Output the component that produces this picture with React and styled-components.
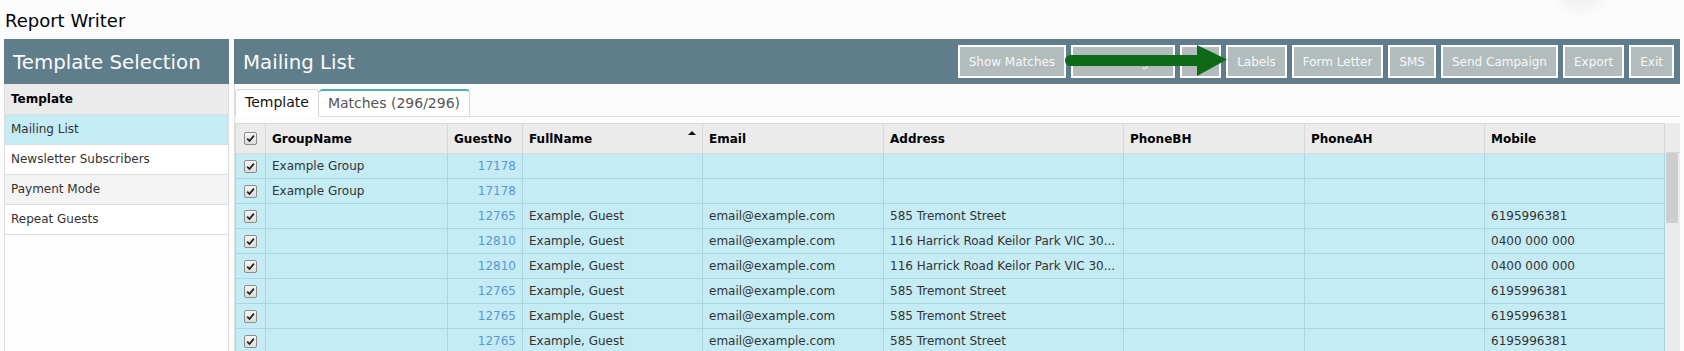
import React from 'react'
import styled, { createGlobalStyle } from 'styled-components'

const GlobalStyle = createGlobalStyle`
  html, body {
    margin: 0;
    padding: 0;
    background: #fcfcfc;
    font-family: "DejaVu Sans", Verdana, sans-serif;
    color: #333;
    overflow: hidden;
  }
`

const Page = styled.div`
  position: relative;
  padding: 8px 4px 0 4px;
  height: 351px;
  box-sizing: border-box;
  overflow: hidden;
`

const Glow = styled.div`
  position: absolute;
  top: -30px;
  left: 1548px;
  width: 66px;
  height: 50px;
  border-radius: 50%;
  background: radial-gradient(ellipse at center, rgba(0,0,0,0.06) 0%, rgba(0,0,0,0) 70%);
`

const PageTitle = styled.h1`
  margin: 0;
  height: 31px;
  font-size: 18px;
  font-weight: normal;
  line-height: 26px;
  color: #000;
  padding-left: 1px;
`

const Columns = styled.div`
  display: flex;
  gap: 5px;
  align-items: stretch;
`

const Sidebar = styled.div`
  width: 225px;
  flex-shrink: 0;
  display: flex;
  flex-direction: column;
  height: 320px;
`

const PanelHeader = styled.div`
  position: relative;
  height: 45px;
  background: #607d8b;
  color: #fafafa;
  display: flex;
  align-items: center;
  padding: 0 6px 0 9px;
  font-size: 19.8px;
  flex-shrink: 0;
`

const HeaderTitle = styled.div`
  flex: 1;
  padding-top: 1px;
`

const SideList = styled.div`
  flex: 1;
  background: #fdfdfd;
  border-left: 1px solid #ddd;
  border-right: 1px solid #ddd;
`

const SideItem = styled.div`
  height: ${({ tone }) => (tone === 'head' ? '30px' : '29px')};
  line-height: ${({ tone }) => (tone === 'head' ? '30px' : '29px')};
  padding-left: 6px;
  font-size: 12px;
  border-bottom: 1px solid #dedede;
  color: ${({ bold }) => (bold ? '#000' : '#333')};
  font-weight: ${({ bold }) => (bold ? 'bold' : 'normal')};
  background: ${({ tone }) =>
    tone === 'head' ? '#ebebeb' : tone === 'active' ? '#c5ebf4' : tone === 'alt' ? '#f3f3f3' : '#fff'};
`

const Main = styled.div`
  flex: 1;
  display: flex;
  flex-direction: column;
  min-width: 0;
`

const ButtonBar = styled.div`
  display: flex;
  gap: 5px;
`

const HeadButton = styled.button`
  height: 33px;
  box-sizing: border-box;
  border: 2px solid #fff;
  background: #b2bcbd;
  color: #f7f7f7;
  font-family: inherit;
  font-size: 12px;
  padding: 0 9px;
  width: ${({ w }) => (w ? `${w}px` : 'auto')};
  white-space: nowrap;
  overflow: hidden;
  cursor: pointer;
`

const Arrow = styled.svg`
  position: absolute;
  left: 826px;
  top: 0;
`

const Body = styled.div`
  border-left: 1px solid #ddd;
  padding-top: 5px;
`

const TabStrip = styled.div`
  display: flex;
  border-bottom: 1px solid #dcdcdc;
  height: 27px;
  align-items: flex-end;
`

const Tab = styled.div`
  height: 28px;
  box-sizing: border-box;
  padding: 0 9px;
  font-size: 14px;
  line-height: 25px;
  background: #fff;
  border: 1px solid #d6d6d6;
  border-top: ${({ accent }) => (accent ? '2px solid #45b4bc' : '1px solid #d6d6d6')};
  border-bottom: ${({ active }) => (active ? '1px solid #fff' : '1px solid #dcdcdc')};
  border-left: ${({ accent }) => (accent ? 'none' : '1px solid #d6d6d6')};
  border-radius: 4px 4px 0 0;
  color: ${({ active }) => (active ? '#111' : '#555')};
  margin-bottom: -1px;
`

const GridWrap = styled.div`
  display: flex;
  margin-top: 6px;
`

const Table = styled.table`
  border-collapse: collapse;
  table-layout: fixed;
  width: 1429px;
  font-size: 12px;
`

const Th = styled.th`
  position: relative;
  height: 29px;
  background: #ebebeb;
  border: 1px solid #d8d8d8;
  text-align: left;
  padding: 0 6px;
  color: #000;
  font-weight: bold;
  white-space: nowrap;
  overflow: hidden;
`

const Td = styled.td`
  height: 24px;
  background: #c5ebf4;
  border: 1px solid #a9d6e2;
  padding: 0 6px;
  text-align: ${({ num }) => (num ? 'right' : 'left')};
  color: ${({ num }) => (num ? '#5a98d2' : '#333')};
  white-space: nowrap;
  overflow: hidden;
  text-overflow: clip;
`

const CheckCell = styled.div`
  display: flex;
  justify-content: center;
  align-items: center;
`

const Box = styled.span`
  width: 11px;
  height: 11px;
  border: 1px solid #8c8c8c;
  border-radius: 2px;
  background: linear-gradient(#f6f6f6, #dcdcdc);
  display: flex;
  align-items: center;
  justify-content: center;
`

const SortMark = styled.span`
  position: absolute;
  right: 6px;
  top: 7px;
  width: 0;
  height: 0;
  border-left: 4px solid transparent;
  border-right: 4px solid transparent;
  border-bottom: 4px solid #111;
`

const ScrollCol = styled.div`
  width: 16px;
  display: flex;
  flex-direction: column;
  background: #ebebeb;
`

const ScrollHead = styled.div`
  height: 30px;
  border-bottom: 1px solid #d8d8d8;
  box-sizing: border-box;
`

const Thumb = styled.div`
  margin: 0 2px 0 1px;
  height: 70px;
  background: #cdcdcd;
`

const Check = () => (
  <CheckCell>
    <Box>
      <svg width="9" height="9" viewBox="0 0 9 9">
        <path d="M1.2 4.6 L3.5 7 L7.9 1.6" fill="none" stroke="#222" strokeWidth="1.8" />
      </svg>
    </Box>
  </CheckCell>
)

const columns = [
  { key: 'check', width: 30 },
  { key: 'GroupName', width: 182 },
  { key: 'GuestNo', width: 75 },
  { key: 'FullName', width: 180, sorted: true },
  { key: 'Email', width: 181 },
  { key: 'Address', width: 240 },
  { key: 'PhoneBH', width: 181 },
  { key: 'PhoneAH', width: 180 },
  { key: 'Mobile', width: 180 },
]

const rows = [
  { group: 'Example Group', no: '17178', name: '', email: '', addr: '', mobile: '' },
  { group: 'Example Group', no: '17178', name: '', email: '', addr: '', mobile: '' },
  { group: '', no: '12765', name: 'Example, Guest', email: 'email@example.com', addr: '585 Tremont Street', mobile: '6195996381' },
  { group: '', no: '12810', name: 'Example, Guest', email: 'email@example.com', addr: '116 Harrick Road Keilor Park VIC 30...', mobile: '0400 000 000' },
  { group: '', no: '12810', name: 'Example, Guest', email: 'email@example.com', addr: '116 Harrick Road Keilor Park VIC 30...', mobile: '0400 000 000' },
  { group: '', no: '12765', name: 'Example, Guest', email: 'email@example.com', addr: '585 Tremont Street', mobile: '6195996381' },
  { group: '', no: '12765', name: 'Example, Guest', email: 'email@example.com', addr: '585 Tremont Street', mobile: '6195996381' },
  { group: '', no: '12765', name: 'Example, Guest', email: 'email@example.com', addr: '585 Tremont Street', mobile: '6195996381' },
]

const templates = [
  { label: 'Mailing List', tone: 'active' },
  { label: 'Newsletter Subscribers', tone: 'plain' },
  { label: 'Payment Mode', tone: 'alt' },
  { label: 'Repeat Guests', tone: 'plain' },
]

const buttons = [
  { label: 'Show Matches' },
  { label: 'Mail Merge', w: 104 },
  { label: 'Edit', w: 41 },
  { label: 'Labels' },
  { label: 'Form Letter' },
  { label: 'SMS' },
  { label: 'Send Campaign' },
  { label: 'Export' },
  { label: 'Exit' },
]

const App = () => {
  return (
    <Page>
      <GlobalStyle />
      <Glow />
      <PageTitle>Report Writer</PageTitle>
      <Columns>
        <Sidebar>
          <PanelHeader>
            <HeaderTitle>Template Selection</HeaderTitle>
          </PanelHeader>
          <SideList>
            <SideItem tone="head" bold>Template</SideItem>
            {templates.map((t) => (
              <SideItem key={t.label} tone={t.tone}>{t.label}</SideItem>
            ))}
          </SideList>
        </Sidebar>
        <Main>
          <PanelHeader>
            <HeaderTitle>Mailing List</HeaderTitle>
            <ButtonBar>
              {buttons.map((b) => (
                <HeadButton key={b.label} w={b.w}>{b.label}</HeadButton>
              ))}
            </ButtonBar>
            <Arrow width="170" height="45" viewBox="0 0 170 45">
              <line x1="10.5" y1="21.5" x2="140" y2="21.5" stroke="#0d6a17" strokeWidth="11" strokeLinecap="round" />
              <polygon points="137,6 167,20.5 137,37" fill="#0d6a17" />
            </Arrow>
          </PanelHeader>
          <Body>
            <TabStrip>
              <Tab active>Template</Tab>
              <Tab accent>Matches (296/296)</Tab>
            </TabStrip>
            <GridWrap>
              <Table>
                <colgroup>
                  {columns.map((c) => (
                    <col key={c.key} style={{ width: c.width }} />
                  ))}
                </colgroup>
                <thead>
                  <tr>
                    {columns.map((c) =>
                      c.key === 'check' ? (
                        <Th key={c.key}><Check /></Th>
                      ) : (
                        <Th key={c.key}>
                          {c.key}
                          {c.sorted && <SortMark />}
                        </Th>
                      )
                    )}
                  </tr>
                </thead>
                <tbody>
                  {rows.map((r, i) => (
                    <tr key={i}>
                      <Td><Check /></Td>
                      <Td>{r.group}</Td>
                      <Td num>{r.no}</Td>
                      <Td>{r.name}</Td>
                      <Td>{r.email}</Td>
                      <Td>{r.addr}</Td>
                      <Td></Td>
                      <Td></Td>
                      <Td>{r.mobile}</Td>
                    </tr>
                  ))}
                </tbody>
              </Table>
              <ScrollCol>
                <ScrollHead />
                <Thumb />
              </ScrollCol>
            </GridWrap>
          </Body>
        </Main>
      </Columns>
    </Page>
  )
}

export default App
